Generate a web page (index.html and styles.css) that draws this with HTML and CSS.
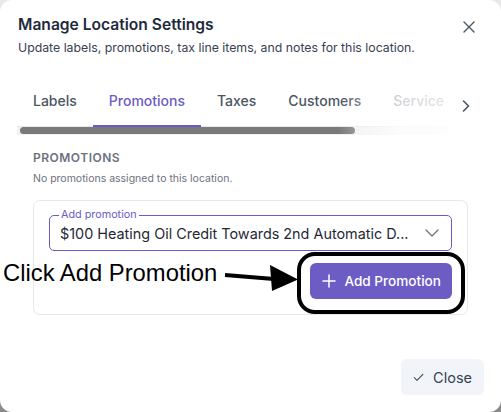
FILE: index.html
```html
<!DOCTYPE html>
<html>
<head>
<meta charset="utf-8">
<link rel="stylesheet" href="styles.css">
</head>
<body>
<div class="dialog">
  <div class="header">
    <div class="titles">
      <h1 class="title">Manage Location Settings</h1>
      <p class="subtitle">Update labels, promotions, tax line items, and notes for this location.</p>
    </div>
    <button class="icon-btn close-x" aria-label="Close">
      <svg width="12" height="12" viewBox="0 0 12 12"><path d="M1 1L11 11M11 1L1 11" stroke="#4b5563" stroke-width="1.4" stroke-linecap="round"/></svg>
    </button>
  </div>

  <div class="tabs-wrap">
    <div class="tabs-scroll">
      <div class="tabs">
        <div class="tab">Labels</div>
        <div class="tab active">Promotions</div>
        <div class="tab">Taxes</div>
        <div class="tab">Customers</div>
        <div class="tab">Service</div>
      </div>
      <div class="scrollbar"><div class="thumb"></div></div>
      <div class="fade"></div>
    </div>
    <button class="icon-btn tab-next" aria-label="Next">
      <svg width="10" height="14" viewBox="0 0 10 14"><path d="M2.5 2L7.5 7L2.5 12" fill="none" stroke="#4b5563" stroke-width="1.6" stroke-linecap="round" stroke-linejoin="round"/></svg>
    </button>
  </div>

  <div class="content">
    <div class="section-label">PROMOTIONS</div>
    <div class="muted">No promotions assigned to this location.</div>
    <div class="card">
      <div class="field">
        <span class="legend">Add promotion</span>
        <span class="value">$100 Heating Oil Credit Towards 2nd Automatic D...</span>
        <svg class="chev" width="14" height="8" viewBox="0 0 14 8"><path d="M1 1L7 7L13 1" fill="none" stroke="#6b7280" stroke-width="1.3" stroke-linecap="round" stroke-linejoin="round"/></svg>
      </div>
      <div class="actions">
        <button class="primary">
          <svg width="14" height="14" viewBox="0 0 14 14"><path d="M7 1V13M1 7H13" stroke="#fff" stroke-width="1.5" stroke-linecap="round"/></svg>
          <span>Add Promotion</span>
        </button>
      </div>
    </div>
  </div>

  <div class="footer">
    <button class="secondary">
      <svg width="14" height="11" viewBox="0 0 14 11"><path d="M1.5 5.5L5 9L12.5 1.5" fill="none" stroke="#374151" stroke-width="1.3" stroke-linecap="round" stroke-linejoin="round"/></svg>
      <span>Close</span>
    </button>
  </div>

  <div class="annot-text">Click Add Promotion</div>
  <svg class="annot-arrow" width="76" height="32" viewBox="0 0 76 32"><path d="M1 13L50 17" stroke="#000" stroke-width="4"/><path d="M46 3L74 17.5L48 29Z" fill="#000"/></svg>
  <div class="annot-box"></div>
</div>
</body>
</html>
```
FILE: styles.css
```css
* { box-sizing: border-box; }
html, body { margin: 0; padding: 0; }
body {
  width: 501px;
  height: 412px;
  background: linear-gradient(#e9e9e9, #8a8a8a);
  font-family: Inter, "Noto Sans", "Liberation Sans", sans-serif;
  overflow: hidden;
}
.dialog {
  position: relative;
  width: 501px;
  height: 412px;
  background: #fff;
  border-radius: 12px;
  display: flex;
  flex-direction: column;
}
.header {
  display: flex;
  justify-content: space-between;
  align-items: flex-start;
  padding: 14px 18px 0 18px;
}
.title {
  margin: 0;
  font-size: 15.6px;
  line-height: 22px;
  font-weight: 600;
  color: #1e293b;
}
.subtitle {
  margin: 3px 0 0;
  font-size: 12.3px;
  line-height: 18px;
  color: #374151;
}
.icon-btn {
  border: 0;
  background: none;
  padding: 0;
  display: flex;
  align-items: center;
  justify-content: center;
  cursor: pointer;
}
.close-x { width: 24px; height: 24px; margin-top: 1px; margin-right: 2px; }

.tabs-wrap {
  display: flex;
  align-items: flex-start;
  margin-top: 20px;
  padding-left: 17px;
}
.tabs-scroll {
  position: relative;
  width: 431px;
  overflow: hidden;
}
.tabs {
  display: flex;
  border-bottom: 1px solid #e5e7eb;
  white-space: nowrap;
}
.tab {
  padding: 14px 16px 14px;
  font-size: 14px;
  line-height: 20px;
  font-weight: 500;
  color: #4b5563;
  flex: none;
  margin-bottom: -1px;
  border-bottom: 2px solid transparent;
}
.tab.active {
  color: #6b5bc4;
  border-bottom-color: #6b5bc4;
}
.scrollbar {
  height: 8px;
  padding: 0 0 0 3px;
  background: #f1f1f1;
}
.thumb {
  width: 335px;
  height: 7px;
  border-radius: 4px;
  background: #7a7a7a;
}
.fade {
  position: absolute;
  right: 0;
  top: 0;
  bottom: 0;
  width: 110px;
  background: linear-gradient(to right, rgba(255,255,255,0), rgba(255,255,255,0.75) 55%, rgba(255,255,255,0.85));
  pointer-events: none;
}
.tab-next { width: 36px; height: 40px; margin-top: 9px; }

.content {
  padding: 15px 33px 0;
}
.section-label {
  font-size: 12px;
  line-height: 16px;
  font-weight: 600;
  letter-spacing: 0.5px;
  color: #6b7280;
}
.muted {
  margin-top: 6px;
  font-size: 10.5px;
  line-height: 14px;
  color: #6b7280;
}
.card {
  margin-top: 14px;
  border: 1px solid #e3e8ef;
  border-radius: 7px;
  padding: 14px 15px 15px;
  display: flex;
  flex-direction: column;
  gap: 12px;
}
.field {
  position: relative;
  height: 36px;
  border: 1px solid #6b5bc4;
  border-radius: 5px;
  display: flex;
  align-items: center;
  padding: 0 12px 0 10px;
  justify-content: space-between;
}
.legend {
  position: absolute;
  top: -8px;
  left: 9px;
  padding: 0 2px;
  background: #fff;
  font-size: 10.8px;
  line-height: 14px;
  color: #6b5bc4;
}
.value {
  font-size: 14.4px;
  line-height: 20px;
  color: #1f2937;
  padding-top: 2px;
  white-space: nowrap;
}
.chev { flex: none; }
.actions {
  display: flex;
  justify-content: flex-end;
}
.primary {
  height: 36px;
  border: 0;
  border-radius: 6px;
  background: #6d5cc4;
  color: #fff;
  font-family: inherit;
  font-size: 13.6px;
  font-weight: 500;
  white-space: nowrap;
  display: flex;
  align-items: center;
  gap: 8px;
  padding: 0 11px 0 12px;
}
.footer {
  margin-top: auto;
  display: flex;
  justify-content: flex-end;
  padding: 0 17px 17px;
}
.secondary {
  height: 36px;
  width: 83px;
  border: 0;
  border-radius: 6px;
  background: #f1f4f9;
  color: #374151;
  font-family: inherit;
  font-size: 14.5px;
  display: flex;
  align-items: center;
  gap: 9px;
  padding: 0 12px;
}

.annot-text {
  position: absolute;
  left: 3px;
  top: 258px;
  font-family: "Liberation Sans", Arial, sans-serif;
  font-size: 23.8px;
  line-height: 30px;
  color: #000;
}
.annot-arrow {
  position: absolute;
  left: 224px;
  top: 262px;
}
.annot-box {
  position: absolute;
  left: 297px;
  top: 252px;
  width: 168px;
  height: 62px;
  border: 4px solid #000;
  border-radius: 18px;
}
```
